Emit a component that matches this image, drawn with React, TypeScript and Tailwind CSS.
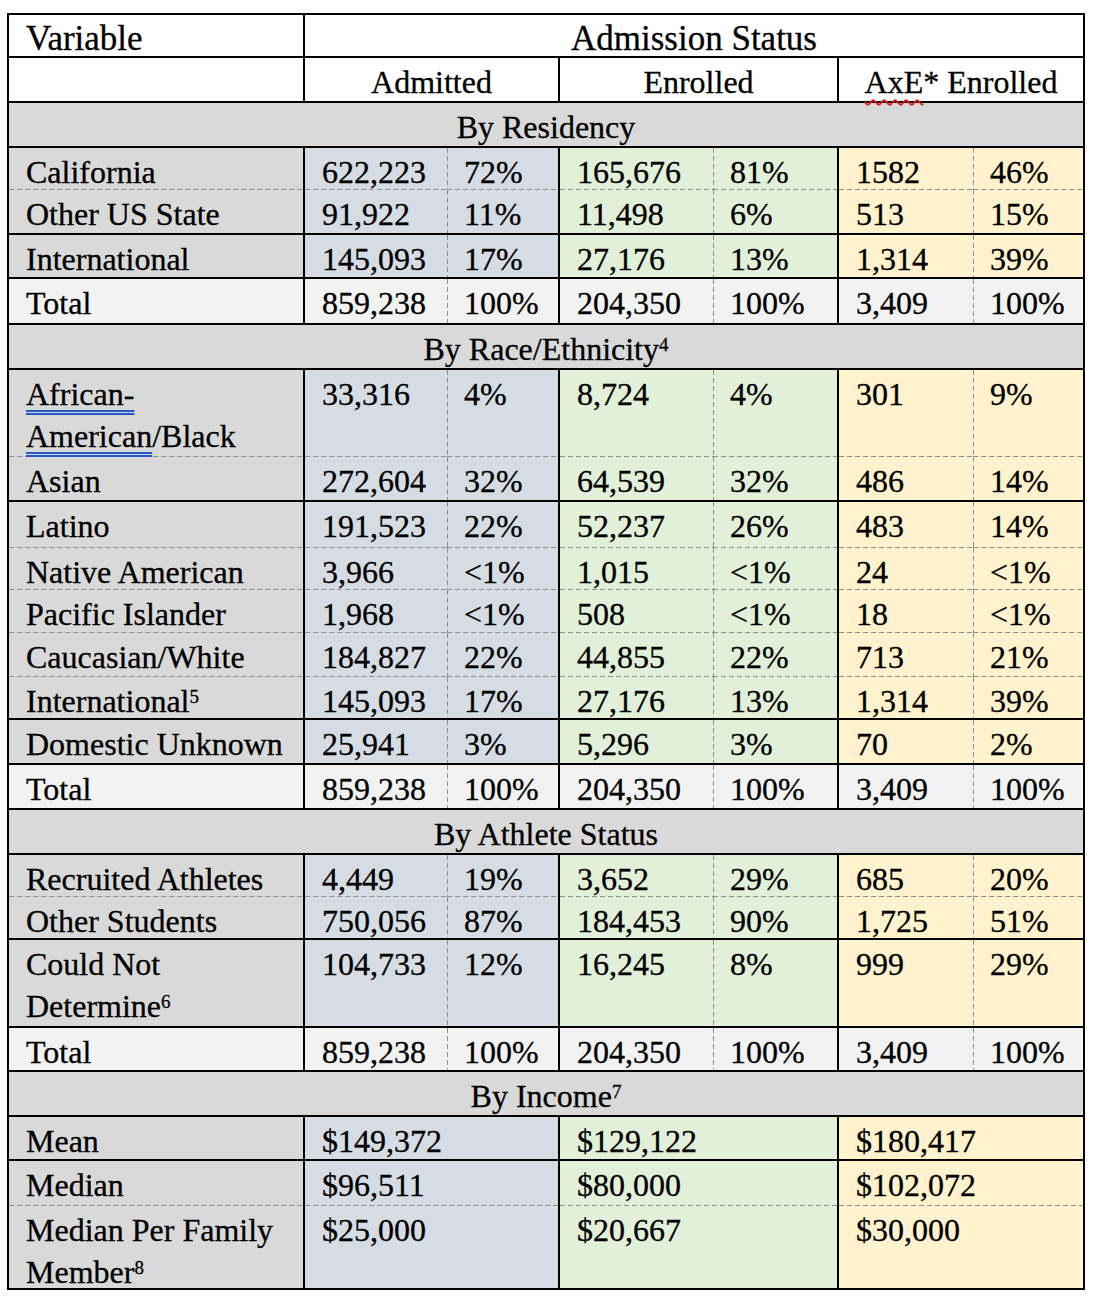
import React from "react";

type Bottom = "solid" | "dashed" | "none";

const LB_MAIN = "border-l-2 border-l-black";
const BB_SOLID = "border-b-2 border-b-black";

// dashed lines drawn as background gradients (longer dashes than browser dashed borders)
const DASH_B =
  "bg-[image:repeating-linear-gradient(90deg,#8f8f8f_0_5px,transparent_5px_8px)] bg-[length:100%_1px] bg-bottom bg-no-repeat";
const DASH_L =
  "bg-[image:repeating-linear-gradient(180deg,#8f8f8f_0_5px,transparent_5px_8px)] bg-[length:1px_100%] bg-left bg-no-repeat";
const DASH_BL =
  "bg-[image:repeating-linear-gradient(90deg,#8f8f8f_0_5px,transparent_5px_8px),repeating-linear-gradient(180deg,#8f8f8f_0_5px,transparent_5px_8px)] bg-[length:100%_1px,1px_100%] bg-[position:bottom,left] bg-no-repeat";

const W = ["w-[294px]", "w-[144px]", "w-[111px]", "w-[155px]", "w-[124px]", "w-[136px]", "w-[110px]"];
const W3 = ["w-[294px]", "w-[255px]", "w-[279px]", "w-[246px]"];

const CELL = "shrink-0 pl-[17px] pt-[3px] leading-[42px] whitespace-nowrap";

function lines(bottom: Bottom, leftDashed: boolean) {
  if (bottom === "dashed") return leftDashed ? DASH_BL : DASH_B;
  if (bottom === "solid") return leftDashed ? `${BB_SOLID} ${DASH_L}` : BB_SOLID;
  return leftDashed ? DASH_L : "";
}

function DataRow({
  label,
  vals,
  h,
  bottom,
  total,
}: {
  label: React.ReactNode;
  vals: string[];
  h: string;
  bottom: Bottom;
  total?: boolean;
}) {
  const bgs = total
    ? ["bg-[#f2f2f2]", "bg-[#f2f2f2]", "bg-[#f2f2f2]", "bg-[#f2f2f2]"]
    : ["bg-[#d9d9d9]", "bg-[#d6dce4]", "bg-[#e2efd9]", "bg-[#fff2cc]"];
  return (
    <div className={`flex ${h}`}>
      <div className={`${CELL} ${W[0]} ${bgs[0]} ${lines(bottom, false)}`}>{label}</div>
      {vals.map((v, i) => {
        const group = Math.floor(i / 2) + 1;
        const isSub = i % 2 === 1;
        return (
          <div
            key={i}
            className={`${CELL} ${W[i + 1]} ${bgs[group]} ${isSub ? "" : LB_MAIN} ${lines(bottom, isSub)}`}
          >
            {v}
          </div>
        );
      })}
    </div>
  );
}

function IncomeRow({
  label,
  vals,
  h,
  bottom,
}: {
  label: React.ReactNode;
  vals: string[];
  h: string;
  bottom: Bottom;
}) {
  const bgs = ["bg-[#d9d9d9]", "bg-[#d6dce4]", "bg-[#e2efd9]", "bg-[#fff2cc]"];
  return (
    <div className={`flex ${h}`}>
      <div className={`${CELL} ${W3[0]} ${bgs[0]} ${lines(bottom, false)}`}>{label}</div>
      {vals.map((v, i) => (
        <div key={i} className={`${CELL} ${W3[i + 1]} ${bgs[i + 1]} ${LB_MAIN} ${lines(bottom, false)}`}>
          {v}
        </div>
      ))}
    </div>
  );
}

function Section({ children, h }: { children: React.ReactNode; h: string }) {
  return (
    <div className={`flex ${h} justify-center bg-[#d9d9d9] border-b-2 border-b-black pt-[3px] leading-[42px]`}>
      <span>{children}</span>
    </div>
  );
}

const Sup = ({ children }: { children: React.ReactNode }) => (
  <sup className="text-[19px]">{children}</sup>
);

const BlueU = ({ children }: { children: React.ReactNode }) => (
  <span className="underline decoration-double decoration-[#2458c8] decoration-2 underline-offset-[5px]">
    {children}
  </span>
);

export default function App() {
  return (
    <div className="min-h-[1300px] bg-white pt-[13px] pl-[7px] text-black font-['Liberation_Serif',serif] text-[32px] [-webkit-text-stroke:0.3px_black]">
      <div className="w-[1078px] border-2 border-black">
        {/* Header row 1 */}
        <div className="flex h-[43px] bg-white text-[35px]">
          <div className="w-[294px] shrink-0 pl-[17px] pt-[3px] leading-[42px] border-b-2 border-b-black">
            Variable
          </div>
          <div className="w-[780px] shrink-0 text-center pt-[3px] leading-[42px] border-l-2 border-l-black border-b-2 border-b-black">
            Admission Status
          </div>
        </div>
        {/* Header row 2 */}
        <div className="flex h-[45px] bg-white">
          <div className="w-[294px] shrink-0 border-b-2 border-b-black"></div>
          <div className="w-[255px] shrink-0 text-center pt-[3px] leading-[42px] border-l-2 border-l-black border-b-2 border-b-black">
            Admitted
          </div>
          <div className="w-[279px] shrink-0 text-center pt-[3px] leading-[42px] border-l-2 border-l-black border-b-2 border-b-black">
            Enrolled
          </div>
          <div className="w-[246px] shrink-0 text-center pt-[3px] leading-[42px] border-l-2 border-l-black border-b-2 border-b-black">
            <span className="underline decoration-wavy decoration-[#e0201c] decoration-[length:1.5px] underline-offset-[6px]">
              AxE
            </span>
            * Enrolled
          </div>
        </div>

        <Section h="h-[45px]">By Residency</Section>
        <DataRow label="California" vals={["622,223", "72%", "165,676", "81%", "1582", "46%"]} h="h-[42px]" bottom="dashed" />
        <DataRow label="Other US State" vals={["91,922", "11%", "11,498", "6%", "513", "15%"]} h="h-[45px]" bottom="solid" />
        <DataRow label="International" vals={["145,093", "17%", "27,176", "13%", "1,314", "39%"]} h="h-[44px]" bottom="solid" />
        <DataRow label="Total" vals={["859,238", "100%", "204,350", "100%", "3,409", "100%"]} h="h-[46px]" bottom="solid" total />

        <Section h="h-[45px]">
          By Race/Ethnicity<Sup>4</Sup>
        </Section>
        <DataRow
          label={
            <>
              <BlueU>African-</BlueU>
              <br />
              <BlueU>American</BlueU>/Black
            </>
          }
          vals={["33,316", "4%", "8,724", "4%", "301", "9%"]}
          h="h-[87px]"
          bottom="dashed"
        />
        <DataRow label="Asian" vals={["272,604", "32%", "64,539", "32%", "486", "14%"]} h="h-[45px]" bottom="solid" />
        <DataRow label="Latino" vals={["191,523", "22%", "52,237", "26%", "483", "14%"]} h="h-[46px]" bottom="dashed" />
        <DataRow label="Native American" vals={["3,966", "<1%", "1,015", "<1%", "24", "<1%"]} h="h-[42px]" bottom="dashed" />
        <DataRow label="Pacific Islander" vals={["1,968", "<1%", "508", "<1%", "18", "<1%"]} h="h-[43px]" bottom="dashed" />
        <DataRow label="Caucasian/White" vals={["184,827", "22%", "44,855", "22%", "713", "21%"]} h="h-[44px]" bottom="dashed" />
        <DataRow
          label={
            <>
              International<Sup>5</Sup>
            </>
          }
          vals={["145,093", "17%", "27,176", "13%", "1,314", "39%"]}
          h="h-[43px]"
          bottom="solid"
        />
        <DataRow label="Domestic Unknown" vals={["25,941", "3%", "5,296", "3%", "70", "2%"]} h="h-[45px]" bottom="solid" />
        <DataRow label="Total" vals={["859,238", "100%", "204,350", "100%", "3,409", "100%"]} h="h-[45px]" bottom="solid" total />

        <Section h="h-[45px]">By Athlete Status</Section>
        <DataRow label="Recruited Athletes" vals={["4,449", "19%", "3,652", "29%", "685", "20%"]} h="h-[42px]" bottom="dashed" />
        <DataRow label="Other Students" vals={["750,056", "87%", "184,453", "90%", "1,725", "51%"]} h="h-[43px]" bottom="solid" />
        <DataRow
          label={
            <>
              Could Not
              <br />
              Determine<Sup>6</Sup>
            </>
          }
          vals={["104,733", "12%", "16,245", "8%", "999", "29%"]}
          h="h-[88px]"
          bottom="solid"
        />
        <DataRow label="Total" vals={["859,238", "100%", "204,350", "100%", "3,409", "100%"]} h="h-[44px]" bottom="solid" total />

        <Section h="h-[45px]">
          By Income<Sup>7</Sup>
        </Section>
        <IncomeRow label="Mean" vals={["$149,372", "$129,122", "$180,417"]} h="h-[44px]" bottom="solid" />
        <IncomeRow label="Median" vals={["$96,511", "$80,000", "$102,072"]} h="h-[45px]" bottom="dashed" />
        <IncomeRow
          label={
            <>
              Median Per Family
              <br />
              Member<Sup>8</Sup>
            </>
          }
          vals={["$25,000", "$20,667", "$30,000"]}
          h="h-[82px]"
          bottom="none"
        />
      </div>
    </div>
  );
}
